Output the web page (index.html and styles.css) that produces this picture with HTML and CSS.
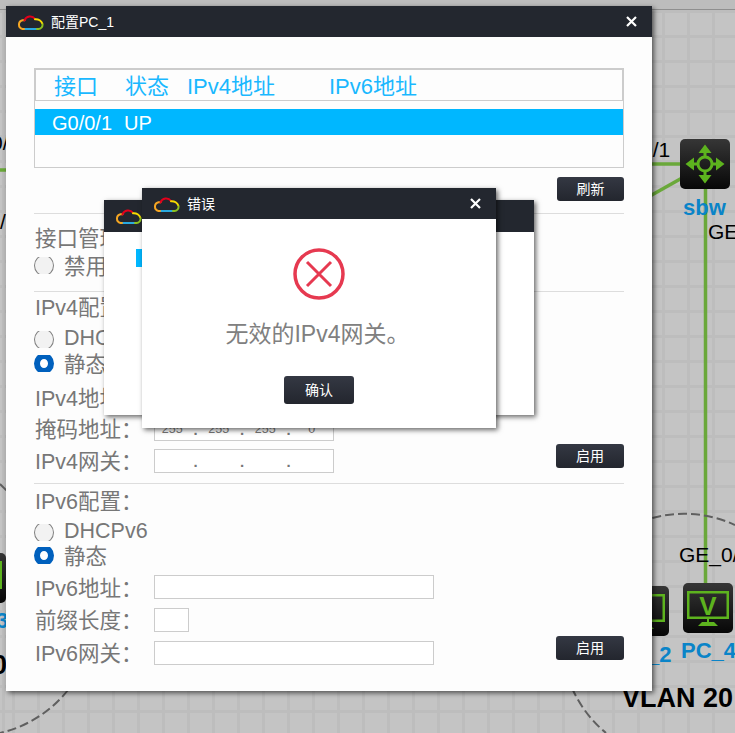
FILE: index.html
```html
<!DOCTYPE html>
<html lang="zh">
<head>
<meta charset="utf-8">
<title>配置PC_1</title>
<link rel="stylesheet" href="styles.css">
</head>
<body>
<svg class="defs" width="0" height="0" aria-hidden="true">
  <symbol id="cloud" viewBox="0 0 27 16">
    <g fill="none" stroke-width="2" stroke-linecap="round">
      <path stroke="#29a9e0" d="M7 15H20"/>
      <path stroke="#f5a623" d="M7 15H5.500A4.500 4.500 0 0 1 5.500 6.200H7.500"/>
      <path stroke="#e3001b" d="M7.500 6.500A6 6 0 0 1 18 5"/>
      <path stroke="#f7dc00" d="M18 5.200C21.500 4.800 24.500 7 25.300 9.500"/>
      <path stroke="#8dc21f" d="M25.600 10.500A4.500 4.500 0 0 1 21.500 15H20"/>
    </g>
  </symbol>
  <symbol id="close" viewBox="0 0 11 11">
    <path d="M1 1L10 10M10 1L1 10" fill="none" stroke="#fff" stroke-width="2.200"/>
  </symbol>
  <symbol id="tile-v" viewBox="0 0 50 50">
    <rect width="50" height="50" rx="5" fill="url(#tile)"/>
    <rect x="5.250" y="9.250" width="39.500" height="25.500" fill="none" stroke="#5db31e" stroke-width="2.500"/>
    <rect x="24" y="36" width="2" height="3" fill="#5db31e"/>
    <path d="M15 43L19 39H31L35 43Z" fill="#5db31e"/>
  </symbol>
  <linearGradient id="tile" x1="0" y1="0" x2="0" y2="1">
    <stop offset="0" stop-color="#363636"/>
    <stop offset="1" stop-color="#070707"/>
  </linearGradient>
</svg>

<main class="stage">
  <svg class="scene" viewBox="0 0 735 733" width="735" height="733">
    <g class="link">
      <path d="M0 170H10"/>
      <path d="M650 164H682"/>
      <path d="M650 196L682 178"/>
      <path d="M705.500 187V585"/>
    </g>
    <g class="zone">
      <path d="M640 522A122 122 0 0 1 735 525"/>
      <path d="M572 688A122 122 0 0 0 606 733"/>
      <path d="M68 690A122 122 0 0 1 0 733"/>
      <path d="M0 484L8 492"/>
    </g>

    <use href="#tile-v" x="-44" y="553" width="50" height="50"/>
    <use href="#tile-v" x="619" y="586" width="50" height="50"/>
    <use href="#tile-v" x="683" y="583" width="50" height="50"/>
    <text class="v-mark" x="708" y="615">V</text>

    <rect x="680" y="139" width="50" height="50" rx="5" fill="url(#tile)"/>
    <g class="hub">
      <circle cx="705" cy="164" r="7"/>
      <path d="M705 157V150M705 171V178M698 164H691M712 164H719"/>
      <path class="hub-tip" d="M705 144.500L711.500 153H698.500ZM705 183.500L711.500 175H698.500ZM685.500 164L694 157.500V170.500ZM724.500 164L716 157.500V170.500Z"/>
    </g>

    <text class="port" x="-9" y="150">0/</text>
    <text class="port" x="0" y="229">/</text>
    <text class="port" x="641" y="157">0/1</text>
    <text class="port" x="708" y="239">GE</text>
    <text class="port" x="679" y="562">GE_0/</text>
    <text class="device" x="683" y="215">sbw</text>
    <text class="device" x="681" y="658">PC_4</text>
    <text class="device" x="647" y="662">_2</text>
    <text class="device" x="-4" y="628">3</text>
    <text class="vlan" x="-8" y="674">0</text>
    <text class="vlan" x="622" y="707">VLAN 20</text>
  </svg>

  <section class="window window-main">
    <header class="titlebar">
      <svg class="cloud"><use href="#cloud"/></svg>
      <span class="title">配置PC_1</span>
      <svg class="close"><use href="#close"/></svg>
    </header>
    <div class="content">
      <div class="if-head">
        <span class="col-name">接口</span>
        <span class="col-state">状态</span>
        <span class="col-v4">IPv4地址</span>
        <span class="col-v6">IPv6地址</span>
      </div>
      <div class="if-list">
        <div class="if-row">
          <span class="cell-name">G0/0/1</span>
          <span>UP</span>
        </div>
      </div>
      <div class="toolbar"><button class="btn btn-refresh">刷新</button></div>

      <hr class="rule rule-a">
      <div class="row row-text row-first">接口管理：</div>
      <div class="row row-text row-radio"><span class="radio"></span>禁用</div>

      <hr class="rule rule-b">
      <div class="row row-text row-head">IPv4配置：</div>
      <div class="row row-latin row-dhcp"><span class="radio"></span>DHCP</div>
      <div class="row row-text row-static"><span class="radio radio-on"></span>静态</div>
      <div class="row row-addr">
        <label class="lbl">IPv4地址：</label>
        <div class="field field-v4 ip"><span>192</span><i>.</i><span>168</span><i>.</i><span>1</span><i>.</i><span>1</span></div>
      </div>
      <div class="row row-next">
        <label class="lbl lbl-up">掩码地址：</label>
        <div class="field field-v4 ip"><span>255</span><i>.</i><span>255</span><i>.</i><span>255</span><i>.</i><span>0</span></div>
      </div>
      <div class="row row-next">
        <label class="lbl lbl-up">IPv4网关：</label>
        <div class="field field-v4 ip"><span></span><i>.</i><span></span><i>.</i><span></span><i>.</i><span></span></div>
        <button class="btn btn-apply">启用</button>
      </div>

      <hr class="rule rule-c">
      <div class="row row-text row-head6">IPv6配置：</div>
      <div class="row row-latin row-dhcp6"><span class="radio"></span>DHCPv6</div>
      <div class="row row-text row-static6"><span class="radio radio-on"></span>静态</div>
      <div class="row row-addr6">
        <label class="lbl">IPv6地址：</label>
        <div class="field field-v6"></div>
      </div>
      <div class="row row-next6">
        <label class="lbl lbl-up">前缀长度：</label>
        <div class="field field-len"></div>
      </div>
      <div class="row row-next6">
        <label class="lbl lbl-up">IPv6网关：</label>
        <div class="field field-v6"></div>
        <button class="btn btn-apply">启用</button>
      </div>
    </div>
  </section>

  <section class="window window-back">
    <header class="titlebar titlebar-back">
      <svg class="cloud"><use href="#cloud"/></svg>
    </header>
    <div class="back-mark"></div>
  </section>

  <section class="window window-error">
    <header class="titlebar">
      <svg class="cloud"><use href="#cloud"/></svg>
      <span class="title">错误</span>
      <svg class="close"><use href="#close"/></svg>
    </header>
    <div class="error-body">
      <svg class="error-icon" viewBox="0 0 52 52" width="52" height="52">
        <circle cx="26" cy="26" r="24" fill="none" stroke="#e63950" stroke-width="3.500"/>
        <path d="M14 14L38 38M38 14L14 38" fill="none" stroke="#e63950" stroke-width="3"/>
      </svg>
      <p class="error-text">无效的IPv4网关。</p>
      <button class="btn btn-ok">确认</button>
    </div>
  </section>
</main>
</body>
</html>
```

FILE: styles.css
```css
*, *::before { box-sizing: border-box; }

html, body {
  margin: 0;
  padding: 0;
}

body {
  width: 735px;
  height: 733px;
  overflow: hidden;
  font-family: "Liberation Sans", "Noto Sans CJK SC", sans-serif;
}

.defs { position: absolute; }

.stage {
  position: relative;
  width: 735px;
  height: 733px;
  overflow: hidden;
  background-color: #c4c4c4;
  background-image:
    linear-gradient(#bdbdbd, #bdbdbd),
    linear-gradient(#8f8f8f, #8f8f8f),
    repeating-linear-gradient(90deg, #bdbdbd 0 3px, transparent 3px 25px),
    repeating-linear-gradient(0deg, #bdbdbd 0 3px, transparent 3px 25px);
  background-size: 100% 9px, 100% 1px, 100% 100%, 100% 100%;
  background-position: 0 0, 0 9px, 12px 0, 0 5px;
  background-repeat: no-repeat, no-repeat, repeat, repeat;
}

.scene {
  position: absolute;
  left: 0;
  top: 0;
}

.link path { fill: none; stroke: #6aa83a; stroke-width: 3.5; }
.zone path { fill: none; stroke: #5f5f5f; stroke-width: 2; stroke-dasharray: 9 4; }
.hub circle { fill: none; stroke: #5db31e; stroke-width: 3; }
.hub path { fill: none; stroke: #5db31e; stroke-width: 3; }
.hub .hub-tip { fill: #5db31e; stroke: none; }
.v-mark { font-size: 26px; font-weight: 700; fill: #5db31e; text-anchor: middle; }
.port { font-size: 21px; fill: #000; }
.device { font-size: 22px; font-weight: 700; fill: #0a84c8; }
.vlan { font-size: 27px; font-weight: 700; fill: #000; }

/* Windows */
.window {
  position: absolute;
  display: flex;
  flex-direction: column;
  background: #fdfdfd;
  box-shadow: 2px 2px 5px rgba(0, 0, 0, .6);
}

.window-main { left: 6px; top: 6px; width: 646px; height: 685px; }
.window-back { left: 104px; top: 200px; width: 430px; height: 215px; background: #fff; }
.window-error { left: 142px; top: 188px; width: 354px; height: 240px; background: #fff; }

.titlebar {
  display: flex;
  align-items: center;
  flex: none;
  height: 31px;
  padding: 0 15px 0 11px;
  background: #23272f;
  color: #fff;
}

.titlebar-back { height: 32px; }
.cloud { width: 27px; height: 16px; flex: none; }
.title { margin: 0 0 2px 7px; font-size: 14px; }
.close { width: 11px; height: 11px; margin-left: auto; flex: none; }

.back-mark {
  width: 6px;
  height: 18px;
  margin: 17px 0 0 32px;
  background: #00b7ff;
}

/* Main form */
.content { padding: 31px 28px 0; color: #777; font-size: 21.5px; }

.if-head {
  display: flex;
  align-items: center;
  height: 33px;
  padding-bottom: 2px;
  border: 2px solid #ccc;
  border-bottom-width: 1px;
  color: #1ab8ff;
  font-size: 22px;
}

.col-name { margin-left: 18px; width: 71px; }
.col-state { width: 62px; }
.col-v4 { width: 142px; }

.if-list {
  height: 67px;
  padding-top: 8px;
  border: 1px solid #ccc;
  border-top: 0;
}

.if-row {
  display: flex;
  align-items: center;
  height: 26px;
  padding: 2px 0 0 17px;
  background: #00b7ff;
  color: #fff;
  font-size: 20px;
}

.cell-name { width: 72px; }

.toolbar { display: flex; justify-content: flex-end; margin-top: 9px; }

.btn {
  display: block;
  height: 24px;
  padding: 0 0 2px;
  border: 0;
  border-radius: 3px;
  background: linear-gradient(#343843, #23262e);
  color: #fff;
  font-family: inherit;
  font-size: 14px;
}

.btn-refresh { width: 67px; }

.btn-apply {
  width: 68px;
  margin: -5px 0 0 auto;
  align-self: flex-start;
}

.rule { height: 1px; margin: 0; border: 0; background: #ddd; }
.rule-a { margin-top: 12px; }
.rule-b { margin-top: 13px; }
.rule-c { margin-top: 10px; }

.row {
  display: flex;
  align-items: center;
  height: 24px;
}

.row-text { padding: 0 0 4px 1px; }
.row-radio, .row-dhcp, .row-static, .row-dhcp6, .row-static6 { padding-left: 0; }

.row-first { margin-top: 12px; }
.row-radio { margin-top: 4px; }
.row-head { margin-top: 3px; }
.row-dhcp { margin-top: 7px; }
.row-static { margin-top: 2px; }
.row-addr { margin-top: 9px; }
.row-next { margin-top: 8px; }
.row-head6 { margin-top: 5px; }
.row-dhcp6 { margin-top: 6px; }
.row-static6 { margin-top: 1px; }
.row-addr6 { margin-top: 7px; }
.row-next6 { margin-top: 9px; }

.radio {
  position: relative;
  flex: none;
  width: 20px;
  height: 17px;
  margin: 2px 10px 0 0;
  overflow: hidden;
}

.radio::before {
  content: "";
  position: absolute;
  left: 0;
  top: -2px;
  width: 20px;
  height: 21px;
  border: 1.5px solid #808080;
  border-radius: 50%;
  background: #f2f2f2;
}

.radio-on::before {
  border: 6.5px solid #0060bd;
  background: #fff;
}

.lbl { flex: none; width: 120px; padding: 0 0 2px 1px; }
.lbl-up { padding-bottom: 4px; }

.field {
  flex: none;
  height: 24px;
  border: 1px solid #ccc;
  background: #fff;
}

.field-v4 { width: 180px; }
.field-v6 { width: 280px; }
.field-len { width: 35px; }

.ip {
  display: flex;
  align-items: center;
  padding: 0 1px;
  font-size: 12.5px;
}

.ip span { width: 32.5px; text-align: center; }
.ip i { width: 14px; font-size: 15px; font-weight: 700; font-style: normal; text-align: center; }

/* Error dialog */
.error-body {
  display: flex;
  flex-direction: column;
  align-items: center;
  padding-top: 29px;
}

.error-icon { display: block; }

.error-text {
  margin: 21px 3px 0 0;
  color: #808080;
  font-size: 23px;
  line-height: 26px;
}

.btn-ok { width: 70px; height: 28px; margin-top: 29px; }
```
